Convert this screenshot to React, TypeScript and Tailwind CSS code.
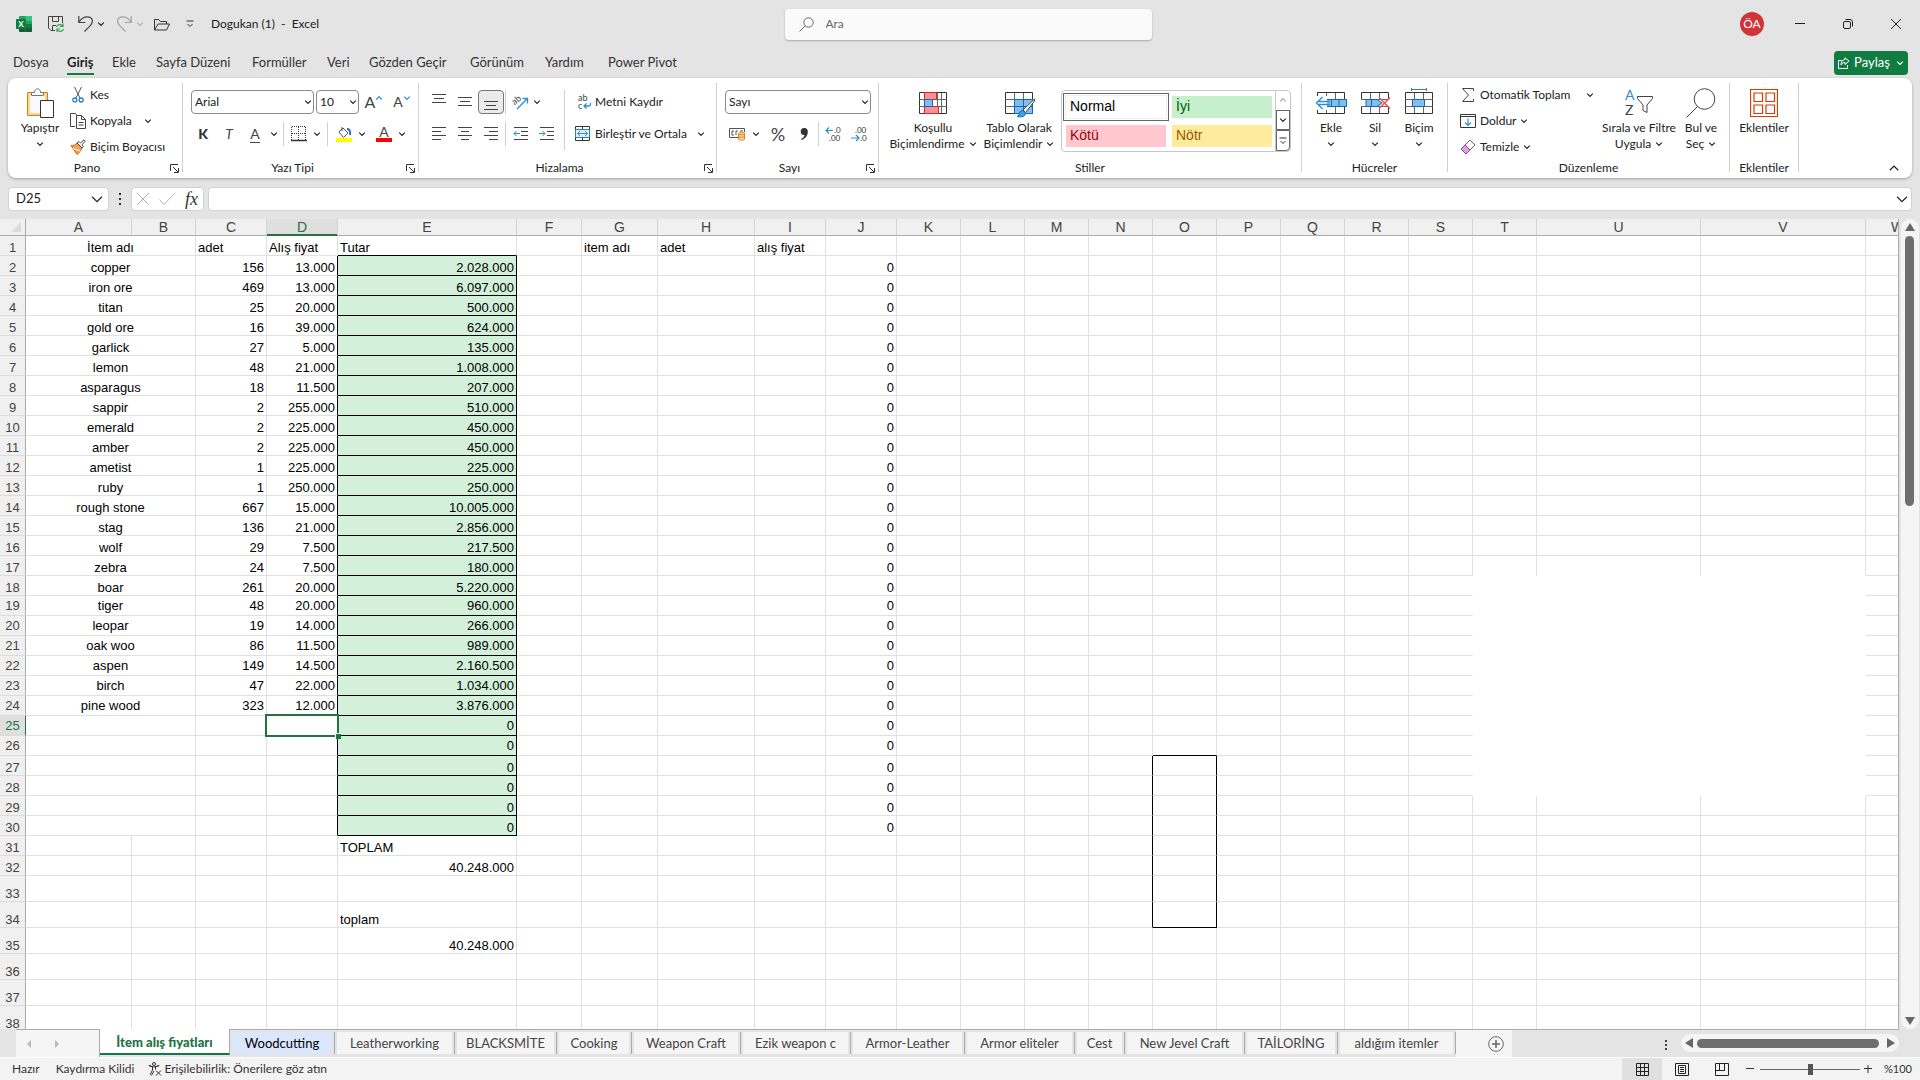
import React, { useState } from "react"
import { clsx } from "clsx"

const COLUMNS = [
  { name: "A", width: "w-[106px]" },
  { name: "B", width: "w-[64px]" },
  { name: "C", width: "w-[71px]" },
  { name: "D", width: "w-[71px]" },
  { name: "E", width: "w-[179px]" },
  { name: "F", width: "w-[65px]" },
  { name: "G", width: "w-[76px]" },
  { name: "H", width: "w-[97px]" },
  { name: "I", width: "w-[71px]" },
  { name: "J", width: "w-[71px]" },
  { name: "K", width: "w-[64px]" },
  { name: "L", width: "w-[64px]" },
  { name: "M", width: "w-[64px]" },
  { name: "N", width: "w-[64px]" },
  { name: "O", width: "w-[64px]" },
  { name: "P", width: "w-[64px]" },
  { name: "Q", width: "w-[64px]" },
  { name: "R", width: "w-[64px]" },
  { name: "S", width: "w-[64px]" },
  { name: "T", width: "w-[64px]" },
  { name: "U", width: "w-[164px]" },
  { name: "V", width: "w-[165px]" },
  { name: "W", width: "w-[64px]" },
]

const ITEMS = [
  ["copper", "156", "13.000", "2.028.000"],
  ["iron ore", "469", "13.000", "6.097.000"],
  ["titan", "25", "20.000", "500.000"],
  ["gold ore", "16", "39.000", "624.000"],
  ["garlick", "27", "5.000", "135.000"],
  ["lemon", "48", "21.000", "1.008.000"],
  ["asparagus", "18", "11.500", "207.000"],
  ["sappir", "2", "255.000", "510.000"],
  ["emerald", "2", "225.000", "450.000"],
  ["amber", "2", "225.000", "450.000"],
  ["ametist", "1", "225.000", "225.000"],
  ["ruby", "1", "250.000", "250.000"],
  ["rough stone", "667", "15.000", "10.005.000"],
  ["stag", "136", "21.000", "2.856.000"],
  ["wolf", "29", "7.500", "217.500"],
  ["zebra", "24", "7.500", "180.000"],
  ["boar", "261", "20.000", "5.220.000"],
  ["tiger", "48", "20.000", "960.000"],
  ["leopar", "19", "14.000", "266.000"],
  ["oak woo", "86", "11.500", "989.000"],
  ["aspen", "149", "14.500", "2.160.500"],
  ["birch", "47", "22.000", "1.034.000"],
  ["pine wood", "323", "12.000", "3.876.000"],
]

const FIXED: Record<string, string> = {
  A1: "İtem adı",
  C1: "adet",
  D1: "Alış fiyat",
  E1: "Tutar",
  G1: "item adı",
  H1: "adet",
  I1: "alış fiyat",
  E31: "TOPLAM",
  E32: "40.248.000",
  E34: "toplam",
  E35: "40.248.000",
}

const MENU = [
  { name: "Dosya", width: "w-[54px]" },
  { name: "Giriş", width: "w-[45px]" },
  { name: "Ekle", width: "w-[44px]" },
  { name: "Sayfa Düzeni", width: "w-24" },
  { name: "Formüller", width: "w-[75px]" },
  { name: "Veri", width: "w-[42px]" },
  { name: "Gözden Geçir", width: "w-[101px]" },
  { name: "Görünüm", width: "w-[75px]" },
  { name: "Yardım", width: "w-[63px]" },
  { name: "Power Pivot", width: "w-24" },
]

const SHEETS = [
  { name: "Woodcutting", width: "w-[100px]" },
  { name: "Leatherworking", width: "w-[115px]" },
  { name: "BLACKSMİTE", width: "w-[97px]" },
  { name: "Cooking", width: "w-[70px]" },
  { name: "Weapon Craft", width: "w-[104px]" },
  { name: "Ezik weapon c", width: "w-[105px]" },
  { name: "Armor-Leather", width: "w-[109px]" },
  { name: "Armor eliteler", width: "w-[105px]" },
  { name: "Cest", width: "w-[45px]" },
  { name: "New Jevel Craft", width: "w-[115px]" },
  { name: "TAİLORİNG", width: "w-[88px]" },
  { name: "aldığım itemler", width: "w-[113px]" },
]

function cellText(col: string, row: number) {
  if (FIXED[col + row]) return FIXED[col + row]
  if (row < 2 || row > 30) return ""
  if (col === "J") return "0"
  const item = ITEMS[row - 2]
  if (!item) return col === "E" ? "0" : ""
  if (col === "A") return item[0]
  if (col === "C") return item[1]
  if (col === "D") return item[2]
  if (col === "E") return item[3]
  return ""
}

/* ---------- small pieces ---------- */

function Chevron({ className = "w-2 h-2", up = false }: { className?: string; up?: boolean }) {
  return (
    <svg viewBox="0 0 8 8" className={clsx("shrink-0", className)} fill="none" stroke="currentColor" strokeWidth="1.2">
      <path vectorEffect="non-scaling-stroke" d={up ? "M1.2 5.5 4 2.7l2.8 2.8" : "M1.2 2.7 4 5.5l2.8-2.8"} />
    </svg>
  )
}

function DropButton({ label }: { label: string }) {
  return (
    <button aria-label={label} className="w-3 h-6 flex items-center justify-center">
      <Chevron />
    </button>
  )
}

function IconButton({ label, active, className = "w-[26px]", children }: { label: string; active?: boolean; className?: string; children: React.ReactNode }) {
  return (
    <button
      aria-label={label}
      className={clsx("h-6 flex items-center justify-center rounded hover:bg-gray-100", className, active && "border border-[#767676] bg-[#ebebeb]")}
    >
      {children}
    </button>
  )
}

function Divider({ className = "h-6" }: { className?: string }) {
  return <div className={clsx("w-px bg-[#d0d0d0] shrink-0", className)} />
}

function Group({ label, width, launcher, children }: { label: string; width: string; launcher?: boolean; children: React.ReactNode }) {
  return (
    <>
      <section className={clsx("h-[94px] flex flex-col shrink-0", width)}>
        <div className="flex-1 flex items-start">{children}</div>
        <div className="h-4 flex items-center">
          <span className="flex-1 text-center leading-4">{label}</span>
          {launcher && (
            <button aria-label={`${label} ayarları`} className="w-4 h-4 flex items-center justify-center">
              <svg viewBox="0 0 9 9" className="w-[9px] h-[9px]" fill="none" stroke="#333">
                <path d="M.5 7V.5H8M3 3l5 5M8.5 4v4.5H4" />
              </svg>
            </button>
          )}
        </div>
      </section>
      <div className="w-px h-[89px] mt-px bg-[#d0d0d0] shrink-0" />
    </>
  )
}

function BigButton({ icon, lines, width, below }: { icon: React.ReactNode; lines: string[]; width: string; below?: boolean }) {
  return (
    <button className={clsx("pt-1 flex flex-col items-center whitespace-nowrap leading-4 rounded hover:bg-gray-100", width)}>
      <span className="h-[34px] flex items-center justify-center">{icon}</span>
      <span>{lines[0]}</span>
      {lines[1] && (
        <span className="flex items-center gap-1">
          {lines[1]}
          <Chevron />
        </span>
      )}
      {below && (
        <span className="h-4 flex items-center">
          <Chevron />
        </span>
      )}
    </button>
  )
}

function SmallButton({ icon, label, drop, gap = "gap-1", height = "h-[26px]" }: { icon: React.ReactNode; label: string; drop?: boolean; gap?: string; height?: string }) {
  return (
    <button className={clsx("flex items-center whitespace-nowrap rounded hover:bg-gray-100", gap, height)}>
      <span className="flex items-center gap-1">
        <span className="w-4 flex justify-center shrink-0">{icon}</span>
        {label}
      </span>
      {drop && <Chevron />}
    </button>
  )
}

function Picker({ label, value, width }: { label: string; value: string; width: string }) {
  return (
    <span className={clsx("relative block", width)}>
      <select aria-label={label} defaultValue={value} className="w-full h-6 pl-[3px] appearance-none rounded border border-[#8a8a8a] bg-white">
        <option>{value}</option>
      </select>
      <Chevron className="absolute right-0.5 top-2 w-2 h-2 pointer-events-none" />
    </span>
  )
}

/* ---------- icons ---------- */

function Lines({ rows, y = 1 }: { rows: [number, number][]; y?: number }) {
  return (
    <svg viewBox="0 0 14 16" className="w-3.5 h-4" stroke="#444" fill="none">
      {rows.map(([a, b], i) => (
        <path key={i} d={`M${a} ${y + i * 4 + 0.5}H${b}`} />
      ))}
    </svg>
  )
}

const PasteIcon = () => (
  <svg viewBox="0 0 28 30" className="w-7 h-[30px]" fill="none">
    <path d="M1.5 4.5h20v23h-20z" fill="#fbd88f" stroke="#e07b10" />
    <path d="M4 7h15v18H4z" fill="#fafafa" />
    <path d="M5.5 7.5v-3h3c0-5 6-5 6 0h3v3z" fill="#fff" stroke="#767676" />
    <path d="M14.5 12.5h13v17h-13z" fill="#fff" stroke="#333" />
  </svg>
)

const CutIcon = () => (
  <svg viewBox="0 0 12 16" className="w-3 h-4" fill="none">
    <path d="M2.5 0 8 11M9.5 0 4 11" stroke="#555" />
    <circle cx="2.8" cy="13" r="2" stroke="#2a7fc0" strokeWidth="1.3" />
    <circle cx="9.2" cy="13" r="2" stroke="#2a7fc0" strokeWidth="1.3" />
  </svg>
)

const CopyIcon = () => (
  <svg viewBox="0 0 16 16" className="w-4 h-4" fill="#fff" stroke="#444">
    <path d="M5 13.5H.5v-13h5l1.5 2" fill="none" />
    <path d="M6.5 2.5h5l4 4v9h-9z" />
    <path d="M11.5 2.5v4h4M8.5 9.5h5M8.5 12h5" fill="none" />
  </svg>
)

const BrushIcon = () => (
  <svg viewBox="0 0 16 16" className="w-4 h-4" fill="none">
    <path d="M1 6.5c3 0 4-.5 6-2.5l5 5c-1 3-3 5-5 6.5z" fill="#f6a04a" stroke="#c96b10" />
    <path d="M3 9.5 10.5 12" stroke="#fff" />
    <path d="m7 4 2-1.5 1.5 1.5L14 .8l1.3 1.3L12 5.8l1.3 1.5L12 9z" fill="#fff" stroke="#444" />
  </svg>
)

const GridIcon = ({ kind }: { kind: "cond" | "table" | "insert" | "delete" | "format" }) => (
  <svg viewBox="0 0 32 30" className="w-8 h-[30px]" fill="none">
    <path d="M2.5 4.5h27v21h-27z" fill="#fff" stroke="#333" />
    <path d="M2 11.5h28M2 18.5h28M11.5 5v20M20.5 5v20" stroke="#666" />
    {kind === "cond" && (
      <>
        <path d="M7.5 4.5h12v7h-12zM7.5 18.5h14v7h-14z" fill="#ff8f94" stroke="#d9281e" />
        <path d="M7.5 11.5h8v7h-8z" fill="#83beec" stroke="#1068b8" />
        <path d="M24.5 5v20" stroke="#666" />
      </>
    )}
    {kind === "table" && (
      <>
        <path d="M11.5 11.5h18v14h-18z" fill="#83beec" stroke="#1068b8" />
        <path d="M11.5 18.5h18M20.5 11.5v14" stroke="#1068b8" />
        <path d="M31.5 11 20 22l2.5 2.5L31.5 13z" fill="#fff" stroke="#444" />
        <path d="M19.5 22.5c-3 0-3 3-3.5 4.5-.5 1-1.5 1-2 1.5 4 1 9 0 8.5-4z" fill="#4a9fe0" stroke="#1068b8" />
      </>
    )}
    {kind === "insert" && (
      <>
        <path d="M4 11.5h27.5v7H4z" fill="#83beec" stroke="#1068b8" />
        <path d="M0 8h12v14H0z" fill="#fff" />
        <path d="M2.5 8V4.5M2.5 22v3.5" stroke="#333" />
        <path d="M16.5 11.5v7M24 11.5v7" stroke="#1068b8" />
        <path d="M15 13.5H3.5M15 16.5H3.5M7.5 9l-6 6 6 6" stroke="#2a8fd6" strokeWidth="1.3" />
      </>
    )}
    {kind === "delete" && (
      <>
        <path d="M0 12h32v6H0z" fill="#fff" />
        <path d="M7 11.5h11l5 3.5-5 3.5H7z" fill="#83beec" stroke="#1068b8" />
        <path d="M12.5 11.5v7" stroke="#1068b8" />
        <path d="m20 9.5 11 11M31 9.5l-11 11" stroke="#f0504c" strokeWidth="1.5" />
      </>
    )}
    {kind === "format" && (
      <>
        <path d="M9.5 11.5h12v7h-12z" fill="#83beec" stroke="#1068b8" />
        <path d="M8.5 1.5h15M8.5 0v3M23.5 0v3" stroke="#2a7fc0" />
      </>
    )}
  </svg>
)

const ExcelLogo = () => (
  <svg viewBox="0 0 16 16" className="w-4 h-4">
    <rect x="3" width="13" height="16" rx="1" fill="#21a366" />
    <path d="M9.5 0H15a1 1 0 0 1 1 1v4H9.5z" fill="#33c481" />
    <path d="M3 8h6.5v8H4a1 1 0 0 1-1-1z" fill="#185c37" />
    <path d="M9.5 8H16v4H9.5z" fill="#107c41" />
    <path d="M9.5 12H16v3a1 1 0 0 1-1 1H9.5z" fill="#185c37" />
    <rect y="3" width="10" height="10" rx="1" fill="#107c41" />
    <text x="5" y="11" textAnchor="middle" fontSize="8" fontWeight="700" fill="#fff">X</text>
  </svg>
)

/* ---------- title bar ---------- */

function TitleBar() {
  return (
    <header className="h-12 flex items-center shrink-0">
      <div className="flex-1 flex items-center pl-4">
        <ExcelLogo />
        <button aria-label="Kaydet" className="ml-4">
          <svg viewBox="0 0 16 16" className="w-4 h-4" fill="none" stroke="#444">
            <path d="M7 14.5H3L.5 12V.5h14V7M4.5.5v5h6v-5M4.5 14V9.5H8" />
            <path d="M8.5 11c1-3 5-3 6.5-.5M15 7.5v3h-3M15.5 13c-1 3-5 3-6.5.5M9 16v-3h3" stroke="#2da44e" strokeWidth="1.2" />
          </svg>
        </button>
        <button aria-label="Geri al" className="ml-3.5 flex items-center gap-1">
          <svg viewBox="0 0 15 16" className="w-[15px] h-4" fill="none" stroke="#444" strokeWidth="1.2">
            <path d="M.8 0v6.5h6.5M1 6.2C3 2.5 6 .8 9.5.8c5.5 0 6 5.500 3 8.5L6.5 15.5" />
          </svg>
          <Chevron />
        </button>
        <button aria-label="Yinele" className="ml-3 flex items-center gap-1 text-[#b0b0b0]">
          <svg viewBox="0 0 15 16" className="w-[15px] h-4" fill="none" stroke="#a0a0a0" strokeWidth="1.2">
            <path d="M14.2 0v6.5H7.7M14 6.2C12 2.5 9 .8 5.5.8c-5.5 0-6 5.500-3 8.5l6 6.2" />
          </svg>
          <Chevron />
        </button>
        <button aria-label="Aç" className="ml-2.5">
          <svg viewBox="0 0 16 13" className="w-4 h-[13px]" fill="none" stroke="#333">
            <path d="M.5 12V1.5h4l2 2h6V6M.5 12 4 6h11.5l-3 6z" />
          </svg>
        </button>
        <button aria-label="Hızlı erişimi özelleştir" className="ml-4">
          <svg viewBox="0 0 8 8" className="w-2 h-2" fill="none" stroke="#333">
            <path d="M.5 1h7M1.500 4 4 6.500 6.500 4" />
          </svg>
        </button>
        <h1 className="ml-[17px] whitespace-pre">Dogukan (1)  -  Excel</h1>
      </div>
      <label className="w-[367px] h-[31px] flex items-center rounded bg-[#fafafa] shadow-[0_1px_2px_rgba(0,0,0,0.25)]">
        <svg viewBox="0 0 15 15" className="ml-3.5 w-[15px] h-[15px]" fill="none" stroke="#666">
          <circle cx="9.5" cy="5.5" r="4.7" />
          <path d="M6 9 .5 14.5" />
        </svg>
        <input type="text" aria-label="Ara" placeholder="Ara" className="ml-3 flex-1 bg-transparent outline-none placeholder:text-[#666]" />
      </label>
      <div className="flex-1 flex items-center justify-end">
        <button className="w-6 h-6 rounded-full bg-[#d13438] text-white">ÖA</button>
        <button aria-label="Simge durumuna küçült" className="ml-3 w-12 h-8 flex items-center justify-center">
          <svg viewBox="0 0 10 10" className="w-2.5 h-2.5" stroke="#222"><path d="M0 4.500h10" /></svg>
        </button>
        <button aria-label="Önceki boyut" className="w-12 h-8 flex items-center justify-center">
          <svg viewBox="0 0 10 10" className="w-2.5 h-2.5" fill="none" stroke="#222">
            <rect x=".5" y="2.5" width="7" height="7" rx="1.5" />
            <path d="M2.5.5H7c1.500 0 2.500 1 2.500 2.500v4.500" />
          </svg>
        </button>
        <button aria-label="Kapat" className="w-12 h-8 flex items-center justify-center">
          <svg viewBox="0 0 10 10" className="w-2.5 h-2.5" stroke="#222"><path d="m0 0 10 10M10 0 0 10" /></svg>
        </button>
      </div>
    </header>
  )
}

function MenuBar() {
  return (
    <nav className="h-[30px] pl-[13px] pr-3 flex items-center shrink-0 text-[13px]">
      <div className="flex-1 flex">
        {MENU.map((item) => (
          <button key={item.name} className={clsx("h-6 text-left whitespace-nowrap", item.width)}>
            <span className={clsx("inline-block h-6 pt-[3px]", item.name === "Giriş" ? "font-bold border-b-2 border-[#107c41] text-[#222]" : "text-[#333]")}>
              {item.name}
            </span>
          </button>
        ))}
      </div>
      <button className="h-6 w-[74px] flex items-center justify-center gap-1 rounded bg-[#107c41] text-white">
        <svg viewBox="0 0 12 12" className="w-3 h-3" fill="none" stroke="#fff">
          <path d="M4 3.5H.5v8h9V8M7 .8 11 4 7 7.5v-2C5 5.500 4 6.500 3 8c0-3 1.500-5.300 4-5.500z" />
        </svg>
        Paylaş
        <Chevron className="w-2 h-2 ml-0.5" />
      </button>
    </nav>
  )
}

/* ---------- ribbon ---------- */

function Ribbon() {
  return (
    <div className="mx-2 h-[100px] pt-1 flex items-start rounded-lg bg-white shadow-[0_1px_3px_rgba(0,0,0,0.3)] shrink-0 overflow-hidden">
      <Group label="Pano" width="w-[174px]" launcher>
        <BigButton icon={<PasteIcon />} lines={["Yapıştır"]} width="w-[60px] ml-0.5" below />
        <div className="flex flex-col items-start">
          <SmallButton icon={<CutIcon />} label="Kes" />
          <SmallButton icon={<CopyIcon />} label="Kopyala" drop gap="gap-3" />
          <SmallButton icon={<BrushIcon />} label="Biçim Boyacısı" />
        </div>
      </Group>

      <Group label="Yazı Tipi" width="w-[235px]" launcher>
        <div className="pt-2 pl-[7px] flex flex-col gap-2">
          <div className="flex gap-0.5 pl-px">
            <Picker label="Yazı tipi" value="Arial" width="w-[123px]" />
            <Picker label="Yazı boyutu" value="10" width="w-[43px]" />
            <IconButton label="Büyüt">
              <span className="text-base text-[#444]">A</span>
              <Chevron up className="w-2 h-2 mb-2 text-[#2a8fd6]" />
            </IconButton>
            <IconButton label="Küçült">
              <span className="text-sm text-[#444]">A</span>
              <Chevron className="w-2 h-2 mb-2 text-[#2a8fd6]" />
            </IconButton>
          </div>
          <div className="flex items-center">
            <IconButton label="Kalın"><span className="text-sm font-black text-[#333]">K</span></IconButton>
            <IconButton label="İtalik"><span className="text-sm italic text-[#444]">T</span></IconButton>
            <IconButton label="Altı çizili"><span className="text-sm leading-4 border-b border-[#444] text-[#444]">A</span></IconButton>
            <DropButton label="Altı çizili seçenekleri" />
            <Divider className="h-6 mx-[3px]" />
            <IconButton label="Kenarlıklar" className="w-6">
              <svg viewBox="0 0 16 16" className="w-4 h-4" stroke="#333">
                <path d="M1 .5h14M1 7.5h14M.5 1v13M7.5 1v13M14.5 1v13" strokeDasharray="1 1" />
                <path d="M0 14.5h16" strokeWidth="1.5" />
              </svg>
            </IconButton>
            <DropButton label="Kenarlık seçenekleri" />
            <Divider className="h-6 mx-1" />
            <IconButton label="Dolgu rengi" className="w-6">
              <svg viewBox="0 0 16 16" className="w-4 h-4" fill="none" stroke="#555">
                <path d="M6 1v4M3 6l4-4 5 5-4.5 4.5z" />
                <path d="M11 3c3 0 3.500 3 3 6" stroke="#1068b8" strokeWidth="1.8" />
                <path d="M0 12h16v4H0z" fill="#ffff00" stroke="none" />
              </svg>
            </IconButton>
            <DropButton label="Dolgu seçenekleri" />
            <IconButton label="Yazı rengi" className="w-6 ml-1">
              <span className="w-4 h-4 leading-3 text-sm border-b-4 border-[#ff0000] text-[#444]">A</span>
            </IconButton>
            <DropButton label="Yazı rengi seçenekleri" />
          </div>
        </div>
      </Group>

      <Group label="Hizalama" width="w-[297px]" launcher>
        <div className="pt-2 pl-[7px] w-[145px] flex flex-col gap-2 shrink-0">
          <div className="flex items-center">
            <IconButton label="Üste hizala"><Lines y={0} rows={[[0, 14], [2, 12], [0, 14]]} /></IconButton>
            <IconButton label="Ortaya hizala"><Lines y={3} rows={[[0, 14], [2, 12], [0, 14]]} /></IconButton>
            <IconButton label="Alta hizala" active><Lines y={7} rows={[[0, 14], [2, 12], [0, 14]]} /></IconButton>
            <Divider className="h-6 mx-px" />
            <IconButton label="Yönlendirme">
              <svg viewBox="0 0 16 16" className="w-4 h-4 overflow-visible" fill="none">
                <text x="1" y="9" fontSize="9" fill="#444" transform="rotate(-40 5 8)">ab</text>
                <path d="M5 15 15 5M10.5 4.5h5v5" stroke="#2a8fd6" strokeWidth="1.3" />
              </svg>
            </IconButton>
            <Chevron />
          </div>
          <div className="flex items-center">
            <IconButton label="Sola hizala"><Lines rows={[[0, 14], [0, 9], [0, 14], [0, 9]]} /></IconButton>
            <IconButton label="Ortala"><Lines rows={[[0, 14], [3, 11], [0, 14], [3, 11]]} /></IconButton>
            <IconButton label="Sağa hizala"><Lines rows={[[0, 14], [5, 14], [0, 14], [5, 14]]} /></IconButton>
            <Divider className="h-6 mx-px" />
            <IconButton label="Girintiyi azalt">
              <svg viewBox="0 0 15 14" className="w-[15px] h-3.5" fill="none" stroke="#444">
                <path d="M1 .5h14M8 4.5h7M8 8.5h7M1 12.5h14" />
                <path d="M7 6.5H1M3.5 4 1 6.5 3.5 9" stroke="#2a8fd6" />
              </svg>
            </IconButton>
            <IconButton label="Girintiyi artır">
              <svg viewBox="0 0 15 14" className="w-[15px] h-3.5" fill="none" stroke="#444">
                <path d="M1 .5h14M8 4.5h7M8 8.5h7M1 12.5h14" />
                <path d="M0 6.5h6M3.5 4 6 6.5 3.5 9" stroke="#2a8fd6" />
              </svg>
            </IconButton>
          </div>
        </div>
        <Divider className="mt-[7px] h-[62px]" />
        <div className="pt-2 pl-[10px] flex flex-col gap-2 items-start">
          <SmallButton
            height="h-6"
            label="Metni Kaydır"
            icon={
              <svg viewBox="0 0 16 16" className="w-4 h-4 overflow-visible" fill="none">
                <text x="3" y="7" fontSize="9" fill="#444">ab</text>
                <text x="3" y="15" fontSize="9" fill="#444">c</text>
                <path d="M15.5 9v1.500c0 1-.5 1.500-1.500 1.500H9M11.500 9.500 9 12l2.500 2.500" stroke="#2a8fd6" strokeWidth="1.3" />
              </svg>
            }
          />
          <SmallButton
            height="h-6"
            label="Birleştir ve Ortala"
            drop
            gap="gap-2.5"
            icon={
              <svg viewBox="0 0 16 16" className="w-4 h-4" fill="none" stroke="#333">
                <path d="M.5.5h14v14H.5zM7.5 1v2M7.5 12v2" />
                <path d="M.5 3.5h14v8H.5z" fill="#e3f1fb" stroke="#2a7fc0" />
                <path d="M2.5 7.5h10M5 5 2.5 7.5 5 10M10 5l2.5 2.5L10 10" stroke="#2a8fd6" />
              </svg>
            }
          />
        </div>
      </Group>

      <Group label="Sayı" width="w-[161px]" launcher>
        <div className="pt-2 pl-[7px] flex flex-col gap-2">
          <div className="pl-px">
            <Picker label="Sayı biçimi" value="Sayı" width="w-[146px]" />
          </div>
          <div className="flex items-center">
            <IconButton label="Para birimi">
              <svg viewBox="0 0 17 14" className="w-[17px] h-3.5" fill="none" stroke="#555">
                <path d="M9 10.5H.5v-9h15V5" />
                <path d="M5 4H3v4h2M7 8V4h2M11 4h3" />
                <path d="M9.5 6.5c0-1.500 6-1.500 6 0V12c0 1.500-6 1.500-6 0z" fill="#fbd9b0" stroke="#e07b10" />
                <path d="M9.5 7c1 1 5 1 6 0M9.5 9.500c1 1 5 1 6 0" stroke="#e07b10" />
              </svg>
            </IconButton>
            <DropButton label="Para birimi seçenekleri" />
            <IconButton label="Yüzde" className="w-[26px] ml-[3px]"><span className="text-lg text-[#444]">%</span></IconButton>
            <IconButton label="Virgül">
              <svg viewBox="0 0 8 12" className="w-2 h-3" fill="#333">
                <path d="M4 0a3.500 3.500 0 0 1 3.800 3.800C7.800 8 5 11 1.500 12L1 11c2-1 3.300-2.300 3.500-4A3.500 3.500 0 1 1 4 0z" />
              </svg>
            </IconButton>
            <Divider className="h-6 mx-px" />
            <IconButton label="Ondalık artır">
              <svg viewBox="0 0 16 16" className="w-4 h-4 overflow-visible" fill="none">
                <text x="9" y="7" fontSize="8" fill="#333">.0</text>
                <text x="4" y="15" fontSize="8" fill="#333">.00</text>
                <path d="M8 4.500H1M4 1.500l-3 3 3 3" stroke="#2a8fd6" strokeWidth="1.2" />
              </svg>
            </IconButton>
            <IconButton label="Ondalık azalt">
              <svg viewBox="0 0 16 16" className="w-4 h-4 overflow-visible" fill="none">
                <text x="4" y="7" fontSize="8" fill="#333">.00</text>
                <text x="9" y="15" fontSize="8" fill="#333">.0</text>
                <path d="M0 12h7.500M5 9l3 3-3 3" stroke="#2a8fd6" strokeWidth="1.2" />
              </svg>
            </IconButton>
          </div>
        </div>
      </Group>

      <Group label="Stiller" width="w-[422px]">
        <BigButton icon={<GridIcon kind="cond" />} lines={["Koşullu", "Biçimlendirme"]} width="w-[92px] ml-2" />
        <BigButton icon={<GridIcon kind="table" />} lines={["Tablo Olarak", "Biçimlendir"]} width="w-[76px] ml-0.5" />
        <div className="mt-2 ml-1 h-[62px] flex rounded border border-[#c8c8c8] text-sm font-['Liberation_Sans',sans-serif]">
          <div className="pt-0.5 pl-px grid grid-cols-2">
            <button className="w-[106px] h-7 p-px border border-[#666] text-black">
              <span className="block h-full px-1 border border-[#eee] text-left leading-5">Normal</span>
            </button>
            <button className="w-[106px] h-7 p-[3px]"><span className="block h-full px-1 bg-[#c6efce] text-[#006100] text-left leading-5">İyi</span></button>
            <button className="w-[106px] h-7 p-[3px]"><span className="block h-full px-1 bg-[#ffc7ce] text-[#9c0006] text-left leading-5">Kötü</span></button>
            <button className="w-[106px] h-7 p-[3px]"><span className="block h-full px-1 bg-[#ffeb9c] text-[#9c5700] text-left leading-5">Nötr</span></button>
          </div>
          <div className="w-[15px] flex flex-col border-l border-[#c8c8c8]">
            <button aria-label="Önceki stiller" className="flex-1 flex items-center justify-center text-[#b0b0b0]"><Chevron up /></button>
            <button aria-label="Sonraki stiller" className="flex-1 flex items-center justify-center border border-[#666]"><Chevron /></button>
            <button aria-label="Tüm stiller" className="flex-1 flex items-center justify-center border border-[#666] rounded-br">
              <svg viewBox="0 0 8 8" className="w-2 h-2" fill="none" stroke="#333"><path d="M.5 1h7M1.5 4 4 6.500 6.500 4" /></svg>
            </button>
          </div>
        </div>
      </Group>

      <Group label="Hücreler" width="w-[145px]">
        <BigButton icon={<GridIcon kind="insert" />} lines={["Ekle"]} width="w-11 ml-[7px]" below />
        <BigButton icon={<GridIcon kind="delete" />} lines={["Sil"]} width="w-11" below />
        <BigButton icon={<GridIcon kind="format" />} lines={["Biçim"]} width="w-11" below />
      </Group>

      <Group label="Düzenleme" width="w-[281px]">
        <div className="w-[141px] ml-3 flex flex-col items-start">
          <SmallButton
            label="Otomatik Toplam"
            drop
            gap="gap-4"
            icon={
              <svg viewBox="0 0 12 14" className="w-3 h-3.5" fill="none" stroke="#444">
                <path d="M11.5 3V.5H.5L6.5 7l-6 6.5h11V11" />
              </svg>
            }
          />
          <SmallButton
            label="Doldur"
            drop
            icon={
              <svg viewBox="0 0 16 14" className="w-4 h-3.5" fill="none" stroke="#333">
                <path d="M.5.5h15v13H.5zM.5 2.5h15" />
                <path d="M8 4.5v7M5 8.500l3 3 3-3" stroke="#2a8fd6" strokeWidth="1.2" />
              </svg>
            }
          />
          <SmallButton
            label="Temizle"
            drop
            icon={
              <svg viewBox="0 0 16 16" className="w-4 h-4" fill="#fff" stroke="#9b3fa5">
                <path d="m10 1 5 5-9 9-5-5z" />
                <path d="m5 6 5 5-4 4-5-5z" fill="#dba3e0" />
              </svg>
            }
          />
        </div>
        <BigButton
          lines={["Sırala ve Filtre", "Uygula"]}
          width="w-[76px]"
          icon={
            <svg viewBox="0 0 30 28" className="w-[30px] h-7 overflow-visible" fill="none" stroke="#444">
              <text x="1" y="11" fontSize="14" fill="#2a8fd6" stroke="none">A</text>
              <text x="1" y="26" fontSize="14" fill="#444" stroke="none">Z</text>
              <path d="M13.5 7.5h15v2L23 16v7.500l-4-2V16l-5.500-6.500z" />
            </svg>
          }
        />
        <BigButton
          lines={["Bul ve", "Seç"]}
          width="w-11 ml-0.5"
          icon={
            <svg viewBox="0 0 30 30" className="w-[30px] h-[30px]" fill="none" stroke="#444">
              <circle cx="18.5" cy="11" r="10.3" />
              <path d="M11.5 18.5.5 29.5" />
            </svg>
          }
        />
      </Group>

      <Group label="Eklentiler" width="w-[68px]">
        <BigButton
          lines={["Eklentiler"]}
          width="w-full"
          icon={
            <svg viewBox="0 0 28 28" className="w-7 h-7" fill="none" stroke="#d83b01">
              <path d="M.5.5h27v27H.5zM4 4h8.500v8.500H4zM16 4h8.500v8.500H16zM4 16h8.500v8.500H4zM16 16h8.500v8.500H16z" strokeWidth="1.2" />
            </svg>
          }
        />
      </Group>

      <button aria-label="Şeridi daralt" className="ml-auto mr-3 self-end mb-1">
        <Chevron up className="w-3 h-3" />
      </button>
    </div>
  )
}

function FormulaBar() {
  return (
    <div className="mt-[9px] mb-2 px-2 h-6 flex items-center shrink-0">
      <label className="w-[101px] h-full pl-[7px] pr-1 flex items-center rounded bg-white border border-[#d0d0d0]">
        <input aria-label="Ad kutusu" defaultValue="D25" className="w-0 flex-1 outline-none text-[13px]" />
        <Chevron className="w-3.5 h-3.5" />
      </label>
      <svg viewBox="0 0 2 12" className="mx-[10px] w-0.5 h-3" fill="#333">
        <path d="M0 0h2v2H0zM0 5h2v2H0zM0 10h2v2H0z" />
      </svg>
      <div className="w-[73px] h-full flex items-center justify-around rounded bg-white border border-[#d0d0d0]">
        <button aria-label="İptal">
          <svg viewBox="0 0 12 12" className="w-3 h-3" stroke="#b0b0b0"><path d="m0 0 12 12M12 0 0 12" /></svg>
        </button>
        <button aria-label="Onayla">
          <svg viewBox="0 0 16 12" className="w-4 h-3" fill="none" stroke="#b0b0b0"><path d="m.5 6.500 4.500 5L15.500.5" /></svg>
        </button>
        <button className="font-['Liberation_Serif',serif] italic text-lg leading-5 text-[#333]">fx</button>
      </div>
      <label className="ml-1 flex-1 h-full pl-2 pr-0.5 flex items-center rounded bg-white border border-[#d0d0d0]">
        <input aria-label="Formül çubuğu" className="flex-1 outline-none" />
        <Chevron className="w-3.5 h-3.5" />
      </label>
    </div>
  )
}

/* ---------- grid ---------- */

// The picture area on T18:V28 has no grid lines, neither inside nor on its edges
function lineColors(col: string, row: number) {
  let right = "border-r-[#e0e0e0]"
  let bottom = "border-b-[#e0e0e0]"
  if (row >= 18 && row <= 28 && "STUV".includes(col)) right = "border-r-white"
  if (row >= 17 && row <= 28 && "TUV".includes(col)) bottom = "border-b-white"
  if (row >= 2 && row <= 30 && "DE".includes(col)) right = "border-r-black"
  if (row <= 30 && col === "E") bottom = "border-b-black"
  if (row >= 27 && row <= 34 && "NO".includes(col)) right = "border-r-black"
  if ((row === 26 || row === 34) && col === "O") bottom = "border-b-black"
  return clsx(right, bottom)
}

function Cell({ col, row }: { col: string; row: number }) {
  const text = cellText(col, row)
  const merged = col === "A" && row <= 30
  return (
    <td
      colSpan={merged ? 2 : 1}
      className={clsx(
        "px-0.5 border-r border-b whitespace-nowrap",
        lineColors(col, row),
        merged ? "text-center" : /^[\d.]+$/.test(text) ? "text-right" : "text-left",
        row >= 19 && row <= 26 ? "pb-0.5" : "pb-0",
        col === "E" && row >= 2 && row <= 30 && "bg-[#d2f0da]",
        col === "D" && row === 25 && "relative"
      )}
    >
      {text}
      {col === "D" && row === 25 && (
        <span className="absolute -inset-0.5 z-10 border-2 border-[#217346]">
          <span className="absolute -right-1 -bottom-1 w-1.5 h-1.5 border-t border-l border-white bg-[#217346]" />
        </span>
      )}
    </td>
  )
}

function Sheet() {
  const rows = Array.from({ length: 38 }, (_, i) => i + 1)
  return (
    <main className="flex-1 min-h-0 flex">
      <div className="flex-1 min-w-0 overflow-hidden bg-white border-r border-[#ababab]">
        <table className="table-fixed w-0 border-separate border-spacing-0 font-['Liberation_Sans',sans-serif] text-[13px] leading-[15px] text-black">
          <colgroup>
            <col className="w-[26px]" />
            {COLUMNS.map((c) => (
              <col key={c.name} className={c.width} />
            ))}
          </colgroup>
          <thead>
            <tr className="h-[17px] bg-[#f0f0f0] text-sm leading-4 text-[#444]">
              <th aria-label="Tümünü seç" className="p-0 border-r border-b border-r-[#ababab] border-b-[#ababab]">
                <svg viewBox="0 0 10 10" className="ml-auto mr-1 w-2.5 h-2.5" fill="#dcdcdc"><path d="M10 0v10H0z" /></svg>
              </th>
              {COLUMNS.map((c) => (
                <th
                  key={c.name}
                  scope="col"
                  className={clsx(
                    "p-0 font-normal border-r border-b border-r-[#d4d4d4]",
                    c.name === "D" ? "bg-[#dfdfdf] text-[#217346] border-b-[#217346] shadow-[inset_0_-1px_0_#217346]" : "border-b-[#ababab]"
                  )}
                >
                  {c.name}
                </th>
              ))}
            </tr>
          </thead>
          <tbody>
            {rows.map((row) => (
              <tr key={row} className={clsx("align-bottom", row >= 33 ? "h-[26px]" : "h-5")}>
                <th
                  scope="row"
                  className={clsx(
                    "px-0 pt-0 font-normal border-r border-b border-b-[#dcdcdc]",
                    row >= 19 && row <= 26 ? "pb-0.5" : "pb-0",
                    row === 25 ? "bg-[#dfdfdf] text-[#217346] border-r-[#217346]" : "bg-[#f0f0f0] text-[#444] border-r-[#ababab]"
                  )}
                >
                  {row}
                </th>
                {COLUMNS.filter((c) => row > 30 || c.name !== "B").map((c) => (
                  <Cell key={c.name} col={c.name} row={row} />
                ))}
              </tr>
            ))}
          </tbody>
        </table>
      </div>
      <div className="w-[21px] px-px flex justify-center">
        <div className="w-[18px] h-full py-1 flex flex-col items-center rounded-full bg-[#f5f5f5]">
          <svg viewBox="0 0 10 8" className="w-2.5 h-2" fill="#666"><path d="M5 0l5 8H0z" /></svg>
          <div className="mt-[5px] w-[9px] h-[270px] rounded-full bg-[#6e6e6e]" />
          <svg viewBox="0 0 10 8" className="mt-auto w-2.5 h-2" fill="#666"><path d="M0 0h10L5 8z" /></svg>
        </div>
      </div>
    </main>
  )
}

/* ---------- bottom bars ---------- */

function SheetTabs() {
  return (
    <div className="h-7 pl-4 flex shrink-0 text-[13px] text-[#444]">
      <div className="flex-1 flex border-t border-[#ababab]">
        <div className="w-[84px] pl-[11px] flex items-center gap-6 bg-[#f5f5f5] border-r border-[#ababab]">
          <button aria-label="Önceki sayfa">
            <svg viewBox="0 0 4 8" className="w-1 h-2" fill="#b8b8b8"><path d="M4 0v8L0 4z" /></svg>
          </button>
          <button aria-label="Sonraki sayfa">
            <svg viewBox="0 0 4 8" className="w-1 h-2" fill="#b8b8b8"><path d="M0 0v8l4-4z" /></svg>
          </button>
        </div>
        <button className="-mt-px mb-0.5 pt-1 w-[130px] bg-white border-b-2 border-r border-b-[#107c41] border-r-[#ababab] font-black text-[#217346] whitespace-nowrap">
          İtem alış fiyatları
        </button>
        {SHEETS.map((s, i) => (
          <div key={s.name} className="flex pt-0.5 pb-[3px] items-stretch">
            <button className={clsx("mx-0.5 whitespace-nowrap leading-5", s.width, i === 0 ? "bg-[#dae7fd] text-black" : "bg-[#f5f5f5]")}>{s.name}</button>
            <div className="w-px bg-[#ababab]" />
          </div>
        ))}
        <button aria-label="Yeni sayfa" className="w-14 pl-6 flex items-center justify-center bg-[#f5f5f5]">
          <svg viewBox="0 0 16 16" className="w-4 h-4" fill="none" stroke="#666">
            <circle cx="8" cy="8" r="7.3" />
            <path d="M4 8h8M8 4v8" strokeWidth="1.5" />
          </svg>
        </button>
        <svg viewBox="0 0 2 10" className="ml-auto mr-3.5 mt-2.5 w-0.5 h-2.5" fill="#444">
          <path d="M0 0h2v2H0zM0 4h2v2H0zM0 8h2v2H0z" />
        </svg>
        <div className="mt-1 w-[218px] h-[18px] px-1 flex items-center rounded-full bg-[#f5f5f5]">
          <svg viewBox="0 0 8 10" className="w-2 h-2.5" fill="#666"><path d="M8 0v10L0 5z" /></svg>
          <div className="ml-1 w-[182px] h-[9px] rounded-full bg-[#6e6e6e]" />
          <svg viewBox="0 0 8 10" className="ml-auto w-2 h-2.5" fill="#666"><path d="M0 0v10l8-5z" /></svg>
        </div>
      </div>
      <div className="w-[21px]" />
    </div>
  )
}

function StatusBar() {
  const [zoom, setZoom] = useState(100)
  return (
    <footer className="h-[23px] pl-3 pr-2 flex items-center shrink-0 bg-[#f3f3f3] border-t border-white text-[#333]">
      <span>Hazır</span>
      <span className="ml-4">Kaydırma Kilidi</span>
      <button className="ml-3.5 flex items-center gap-0.5">
        <svg viewBox="0 0 14 14" className="w-3.5 h-3.5" fill="none" stroke="#333">
          <circle cx="6" cy="2" r="1.5" />
          <path d="M.8 3.5 4.5 5v3L2 13M11.2 3.5 7.5 5v2.500M.8 3.500 6 5l5.200-1.500M6 9l-2.500 4.500M8 8.500l5 5M13 8.500l-5 5" />
        </svg>
        Erişilebilirlik: Önerilere göz atın
      </button>
      <div className="ml-auto flex items-center h-full">
        <button aria-label="Normal görünüm" className="w-10 h-full flex items-center justify-center bg-[#e0e0e0]">
          <svg viewBox="0 0 13 13" className="w-[13px] h-[13px]" fill="none" stroke="#222"><path d="M.5.5h12v12H.5zM4.5 0v13M8.5 0v13M0 4.5h13M0 8.5h13" /></svg>
        </button>
        <button aria-label="Sayfa düzeni" className="w-10 h-full flex items-center justify-center">
          <svg viewBox="0 0 14 13" className="w-3.5 h-[13px]" fill="none" stroke="#222"><path d="M.5.5h13v12H.5zM3.5 2.5h7v8h-7zM5 4.5h4M5 6.5h4M5 8.5h4" /></svg>
        </button>
        <button aria-label="Sayfa sonu önizleme" className="w-10 h-full flex items-center justify-center">
          <svg viewBox="0 0 14 13" className="w-3.5 h-[13px]" fill="none" stroke="#222"><path d="M.5.5h13v12H.5zM4.5.5v7h5v-7M.5 7.5h9" /></svg>
        </button>
        <button aria-label="Uzaklaştır" onClick={() => setZoom(zoom - 10)} className="ml-1 mr-1.5">
          <svg viewBox="0 0 8 8" className="w-2 h-2" stroke="#333"><path d="M0 3.5h8" /></svg>
        </button>
        <input
          type="range"
          aria-label="Yakınlaştırma"
          min={0}
          max={200}
          value={zoom}
          onChange={(e) => setZoom(Number(e.target.value))}
          className="w-[100px] h-3 appearance-none bg-transparent [&::-webkit-slider-runnable-track]:h-px [&::-webkit-slider-runnable-track]:bg-[#666] [&::-webkit-slider-thumb]:appearance-none [&::-webkit-slider-thumb]:w-[5px] [&::-webkit-slider-thumb]:h-[11px] [&::-webkit-slider-thumb]:-mt-[5px] [&::-webkit-slider-thumb]:bg-[#555]"
        />
        <button aria-label="Yakınlaştır" onClick={() => setZoom(zoom + 10)} className="ml-1 mr-3">
          <svg viewBox="0 0 8 8" className="w-2 h-2" stroke="#333"><path d="M0 3.5h8M4 0v8" /></svg>
        </button>
        <span className="text-[11px]">%{zoom}</span>
      </div>
    </footer>
  )
}

export default function App() {
  return (
    <div className="h-screen flex flex-col overflow-hidden bg-[#e4e4e4] font-[Lato,sans-serif] text-xs text-[#222]">
      <TitleBar />
      <MenuBar />
      <Ribbon />
      <FormulaBar />
      <Sheet />
      <SheetTabs />
      <StatusBar />
    </div>
  )
}
